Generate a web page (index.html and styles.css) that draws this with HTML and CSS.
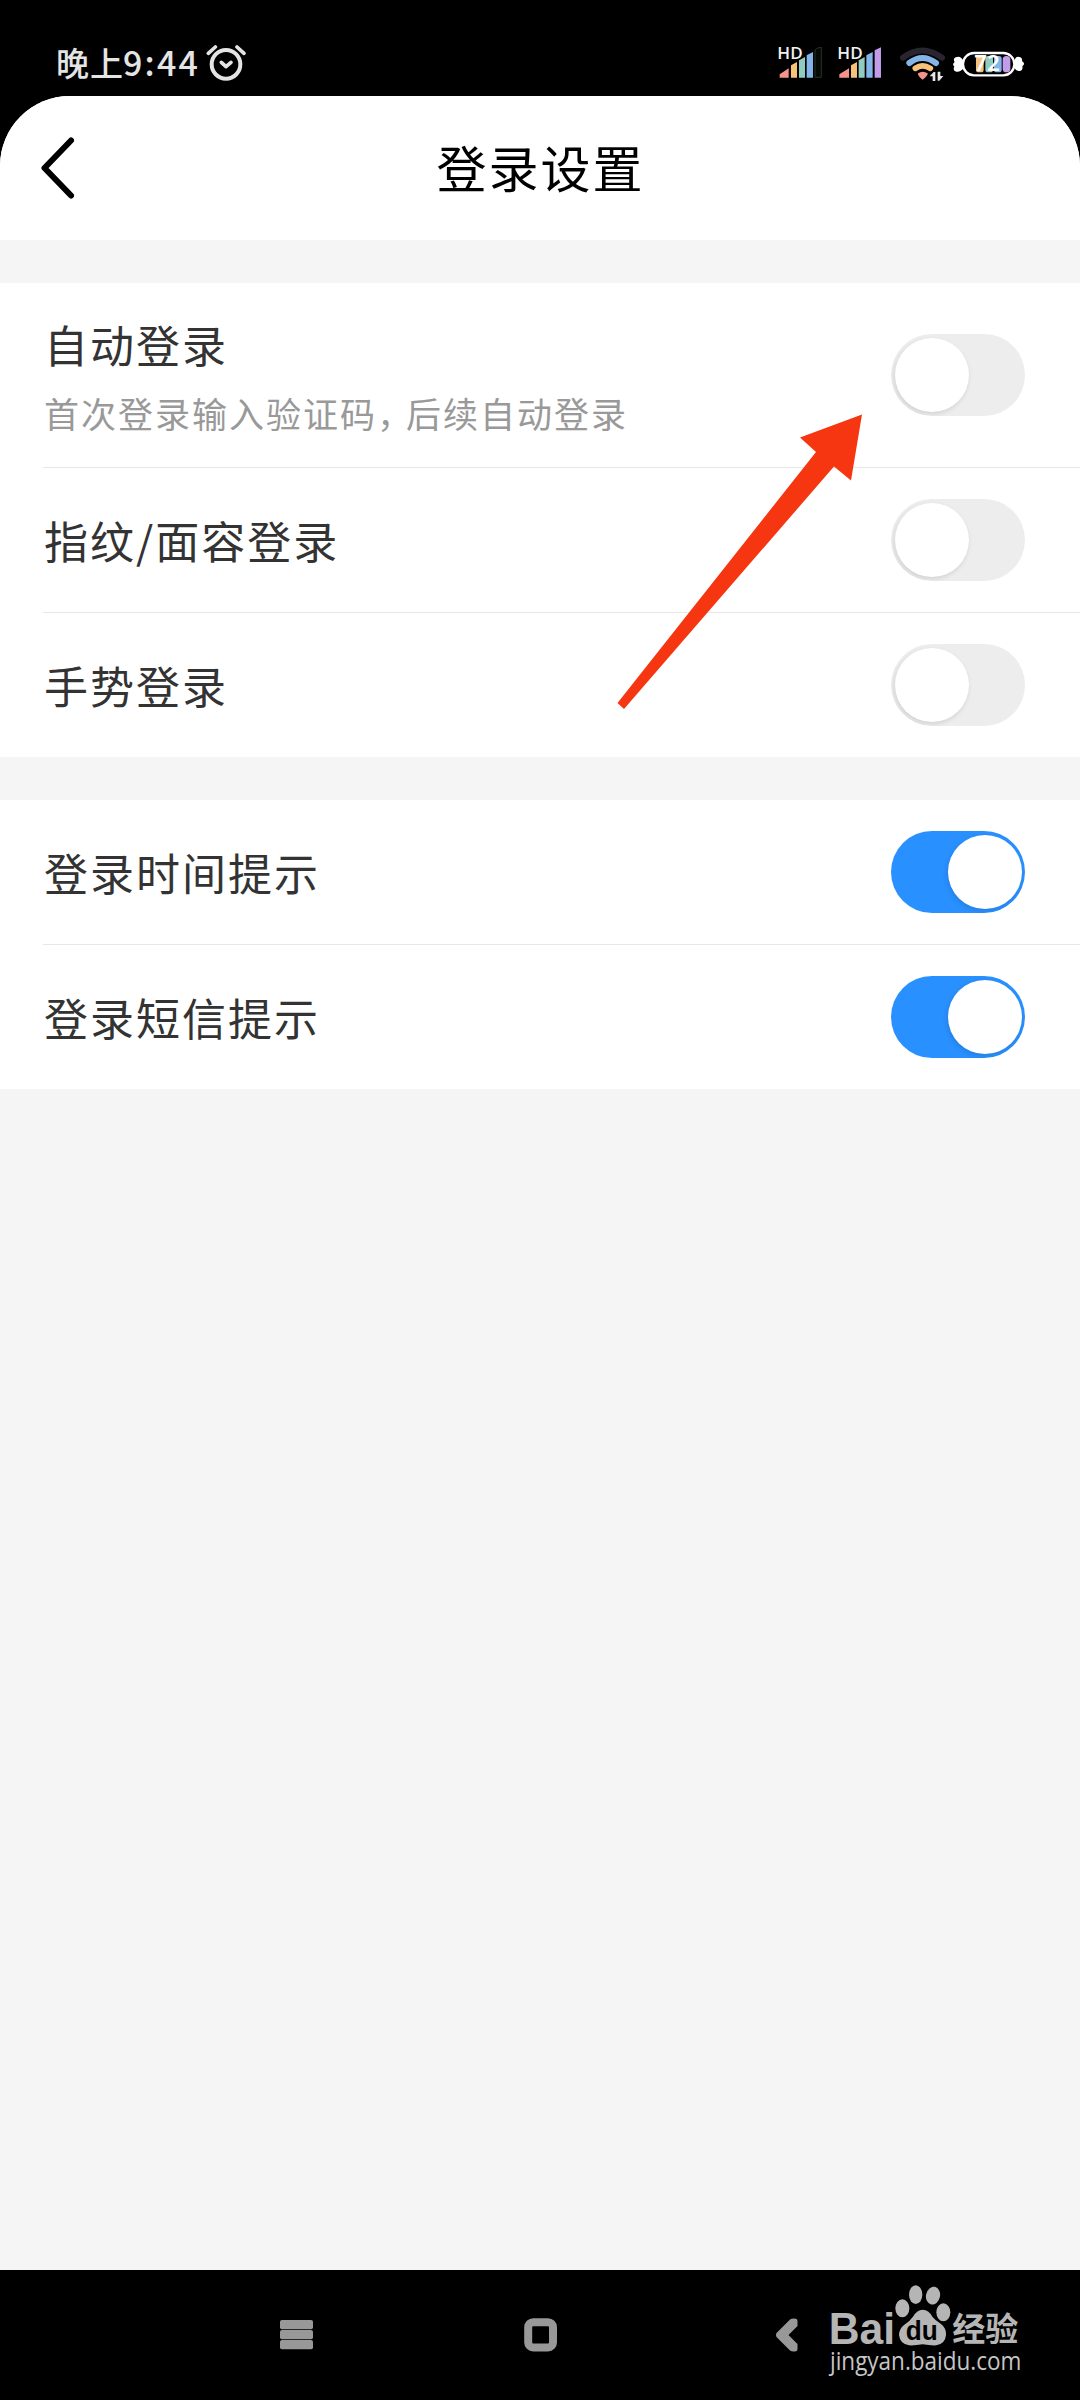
FILE: index.html
```html
<!DOCTYPE html>
<html lang="zh-CN">
<head>
<meta charset="utf-8">
<title>登录设置</title>
<link rel="stylesheet" href="styles.css">
</head>
<body>
<div class="phone">
  <div class="status">
    <span class="status-period">晚上</span><span class="status-time">9:44</span>
    <svg class="alarm" viewBox="0 0 120 120" fill="none" stroke="#e4e4e4" stroke-linecap="round" stroke-linejoin="round">
      <circle cx="60" cy="67" r="43" stroke-width="12"/>
      <path d="M46 61l14 13 15-13" stroke-width="11"/>
      <path d="M7 34L28 15M93 15l21 19" stroke-width="11"/>
    </svg>
    <div class="status-icons">
      <svg class="signal" viewBox="50 0 140 210">
        <path fill="#f5938c" d="M58 133L85 115V143H58z"/>
        <path fill="#f8c27b" d="M92 106L110 96V143H92z"/>
        <path fill="#90ccbf" d="M116 91L134 81V143H116z"/>
        <path fill="#83b5e8" d="M139 76L158 66V143H139z"/>
        <path fill="#050a07" stroke="#253329" stroke-width="3" d="M164 62Q164 54 183 52V142H164z"/>
        <text class="hd" x="51" y="87" textLength="76" lengthAdjust="spacingAndGlyphs">HD</text>
      </svg>
      <svg class="signal second" viewBox="230 0 140 210">
        <path fill="#f5938c" d="M237 133L266 115V143H237z"/>
        <path fill="#f8c27b" d="M272 106L290 96V143H272z"/>
        <path fill="#90ccbf" d="M295 91L313 81V143H295z"/>
        <path fill="#83b5e8" d="M318 76L337 66V143H318z"/>
        <path fill="#c29be9" d="M343 61L362 52V143H343z"/>
        <text class="hd" x="231" y="87" textLength="76" lengthAdjust="spacingAndGlyphs">HD</text>
      </svg>
      <svg class="wifi" viewBox="415 0 145 210">
        <g fill="none" stroke-linecap="round" stroke-width="18">
          <path stroke="#29252f" d="M430 83Q488 40 547 83"/>
          <path stroke="#83b5e8" d="M449 99Q488 69 529 99"/>
          <path stroke="#f8c27b" d="M467 115Q488 100 512 115" stroke-width="17"/>
        </g>
        <path fill="#f5938c" d="M475 130Q489 120 504 130Q505 137 489 149Q474 139 475 130z"/>
        <path fill="#e8e8e8" d="M510 139L522 126H527V153H519V139zM551 138L539 152H534V125H542V138z"/>
      </svg>
      <svg class="battery" viewBox="575 0 225 210">
        <path fill="#fff" d="M609 92Q600 75 586 82Q577 87 583 96Q574 103 582 109Q576 123 588 125Q600 127 611 113zM762 92Q767 76 780 82Q787 85 785 93Q797 102 786 108Q789 119 780 123Q769 125 760 112z"/>
        <rect x="608" y="69" width="154" height="67" rx="33" fill="#000" stroke="#fff" stroke-width="7"/>
        <rect x="647" y="78" width="23" height="49" rx="8" fill="#f8c27b"/>
        <rect x="675" y="78" width="23" height="49" rx="8" fill="#90ccbf"/>
        <rect x="701" y="78" width="23" height="49" rx="8" fill="#83b5e8"/>
        <rect x="727" y="78" width="23" height="49" rx="11" fill="#c29be9"/>
        <text class="level" x="642" y="124" textLength="76" lengthAdjust="spacingAndGlyphs">72</text>
      </svg>
    </div>
  </div>

  <main class="screen">
    <header class="header">
      <svg class="back" viewBox="0 0 36 66"><path d="M31 5.500L4.500 33L31 60.500" fill="none" stroke="#000" stroke-width="6" stroke-linecap="round" stroke-linejoin="round"/></svg>
      <h1 class="title">登录设置</h1>
    </header>
    <section class="group">
      <div class="row tall">
        <div class="labels"><div class="label">自动登录</div><div class="hint">首次登录输入验证码<span class="comma">，</span>后续自动登录</div></div>
        <div class="switch"><div class="knob"></div></div>
      </div>
      <div class="row">
        <div class="label">指纹/面容登录</div>
        <div class="switch"><div class="knob"></div></div>
      </div>
      <div class="row last">
        <div class="label">手势登录</div>
        <div class="switch"><div class="knob"></div></div>
      </div>
    </section>
    <section class="group">
      <div class="row">
        <div class="label">登录时间提示</div>
        <div class="switch on"><div class="knob"></div></div>
      </div>
      <div class="row last">
        <div class="label">登录短信提示</div>
        <div class="switch on"><div class="knob"></div></div>
      </div>
    </section>
  </main>

  <nav class="nav">
    <svg class="nav-menu" viewBox="0 0 33 30" fill="#989898"><rect width="33" height="9.300" rx="2"/><rect y="10" width="33" height="9.300" rx="2"/><rect y="20" width="33" height="9.300" rx="2"/></svg>
    <svg class="nav-home" viewBox="0 0 33 34"><rect x="4.200" y="4.200" width="24.800" height="25.300" rx="5" fill="none" stroke="#989898" stroke-width="8"/></svg>
    <svg class="nav-back" viewBox="0 0 22 34"><path fill="#989898" d="M0.500 15L14 1.500Q16 0 20 0.700Q21.500 1 21.500 3V8L12.500 17L21.500 26V31Q21.500 33 20 33.300Q16 34 14 32.500L0.500 19Q-0.500 17 0.500 15z"/></svg>
  </nav>

  <svg class="arrow" viewBox="0 0 246 296"><path fill="#f63610" d="M245 0.500L183 23.500L199 38L0.500 289L7 295L217 52.500L234 66.500z"/></svg>

  <svg class="watermark" viewBox="260 70 590 300" fill="#b5b5b5">
    <text class="wm-bai" x="265" y="254" textLength="199" lengthAdjust="spacingAndGlyphs">Bai</text>
    <ellipse cx="486" cy="146" rx="21" ry="27"/>
    <ellipse cx="526" cy="105" rx="20" ry="28"/>
    <ellipse cx="578" cy="108" rx="21" ry="27" transform="rotate(12 578 108)"/>
    <ellipse cx="609" cy="158" rx="21" ry="27"/>
    <path d="M547 150Q565 150 576 171Q584 181 602 193Q618 205 617 226Q615 252 588 257Q572 258 547 254Q522 258 506 257Q479 253 476 226Q476 207 492 195Q510 184 519 170Q530 150 547 150z"/>
    <text class="wm-du" x="496" y="240" textLength="96" lengthAdjust="spacingAndGlyphs">du</text>
    <text class="wm-cn" x="636" y="244" textLength="198" lengthAdjust="spacingAndGlyphs">经验</text>
    <text class="wm-url" x="269" y="331" textLength="574" lengthAdjust="spacingAndGlyphs">jingyan.baidu.com</text>
  </svg>
</div>
</body>
</html>
```
FILE: styles.css
```css
* { box-sizing: border-box; }
body { margin: 0; background: #000; font-family: "Noto Sans CJK SC", sans-serif; }
svg { display: block; flex: none; }
.phone { position: relative; width: 1080px; height: 2400px; background: #000; display: flex; flex-direction: column; overflow: hidden; }

.status { height: 96px; display: flex; align-items: flex-start; padding-left: 56px; color: #e4e4e4; font-weight: 500; white-space: nowrap; }
.status-period { width: 67px; margin-top: 38px; font-size: 33px; line-height: 48px; letter-spacing: 1px; }
.status-time { width: 83px; margin-top: 38px; font-size: 34px; line-height: 48px; letter-spacing: 2.200px; }
.alarm { width: 40px; height: 40px; margin-top: 42px; }
.status-icons { display: flex; padding-top: 30px; margin-left: 530.700px; }
.signal { width: 46.670px; height: 70px; }
.second { margin-left: 13.330px; }
.wifi { width: 48.330px; height: 70px; margin-left: 15px; }
.battery { width: 75px; height: 70px; margin-left: 5px; }
.hd { font: 600 49px "Open Sans", sans-serif; fill: #f0f0f0; }
.level { font: 600 62px "Noto Sans", sans-serif; fill: #fff; }

.screen { height: 2174px; background: #f5f5f5; border-radius: 70px 70px 0 0; overflow: hidden; display: flex; flex-direction: column; gap: 43px; }
.header { height: 144px; background: #fff; display: flex; align-items: center; padding-left: 40px; }
.back { width: 36px; height: 66px; }
.title { flex: 1; margin: 0 75px 4px 0; text-align: center; font-size: 50px; line-height: 72px; font-weight: 400; letter-spacing: 2px; color: #000; }

.group { background: #fff; padding-left: 43px; }
.row { height: 145px; display: flex; align-items: center; justify-content: space-between; padding-right: 55px; border-bottom: 1px solid #e7e7e7; }
.tall { height: 185px; }
.last { height: 144px; border-bottom: 0; }
.label { font-size: 44px; line-height: 64px; letter-spacing: 2px; color: #333; padding-left: 1px; }
.hint { font-size: 35px; line-height: 52px; letter-spacing: 2px; color: #999; margin-top: 11px; padding-left: 1px; white-space: nowrap; }
.comma { display: inline-block; width: 29px; }

.switch { width: 134px; height: 82px; border-radius: 41px; background: #ededed; padding: 4px 3.500px; display: flex; overflow: hidden; }
.knob { width: 74px; height: 74px; border-radius: 50%; background: #fff; box-shadow: -1px 2px 5px rgba(0, 0, 0, .12); }
.on { background: #2990ff; justify-content: flex-end; }

.nav { height: 130px; display: flex; align-items: center; padding-left: 280px; }
.nav-menu { width: 33px; height: 30px; }
.nav-home { width: 33px; height: 34px; margin-left: 211px; }
.nav-back { width: 22px; height: 34px; margin-left: 219px; }

.arrow { position: absolute; left: 617px; top: 414px; width: 246px; height: 296px; }
.watermark { position: absolute; left: 826.700px; top: 2283.300px; width: 196.700px; height: 100px; }
.wm-bai { font: 700 131px "Liberation Sans", sans-serif; }
.wm-du { font: 700 82px "Liberation Sans", sans-serif; fill: #000; }
.wm-cn { font: 700 99px "Noto Sans CJK SC", sans-serif; }
.wm-url { font: 400 77px "Open Sans", sans-serif; fill: #c6c6c6; }
```
